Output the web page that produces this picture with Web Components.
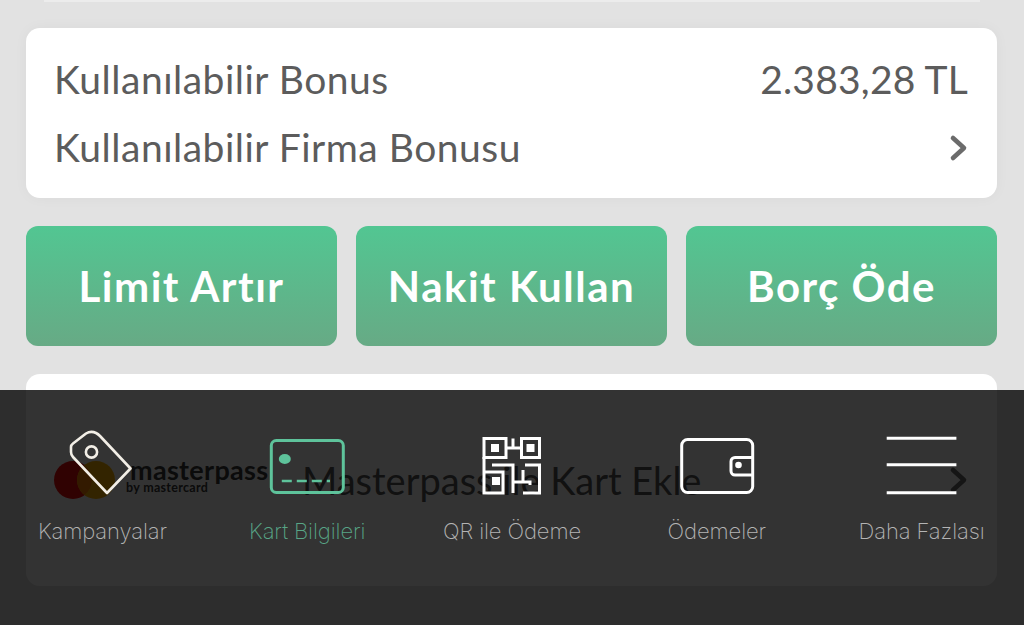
<!DOCTYPE html>
<html lang="tr">
<head>
<meta charset="utf-8">
<title>Kart Bilgileri</title>
<style>
    html, body { margin: 0; height: 625px; overflow: hidden; background: #e2e2e2; }
</style>
</head>
<body>
<app-screen>
    <bonus-card></bonus-card>
    <action-buttons>
        <action-button>Limit Artır</action-button>
        <action-button>Nakit Kullan</action-button>
        <action-button>Borç Öde</action-button>
    </action-buttons>
    <masterpass-card></masterpass-card>
    <tab-bar slot="overlay">
        <tab-item label="Kampanyalar">
            <svg viewBox="0 0 80 68" width="80" height="68" fill="none" stroke="#f2eee6" stroke-width="2.6" stroke-linejoin="round">
                <path d="M11 13.5 L24 3.5 Q29 0.5 34 3 Q36 4 38 6 L68.5 38.5 L45 63 L11 27 Q9 25 9 22 L9 17 Q9 15 11 13.5 Z"/>
                <circle cx="29.5" cy="22" r="5.6"/>
            </svg>
        </tab-item>
        <tab-item label="Kart Bilgileri" active>
            <svg viewBox="0 0 80 68" width="80" height="68" fill="none" stroke="#5ec39b" stroke-width="3">
                <rect x="4.3" y="10.5" width="72" height="52" rx="5"/>
                <ellipse cx="17.8" cy="29" rx="6" ry="5" fill="#5ec39b" stroke="none"/>
                <path d="M14.8 51H63" stroke-width="2.4" stroke-dasharray="10 5"/>
            </svg>
        </tab-item>
        <tab-item label="QR ile Ödeme">
            <svg viewBox="0 0 80 68" width="80" height="68" fill="none" stroke="#fff" stroke-width="3">
                <rect x="12" y="8.5" width="22" height="19"/>
                <rect x="49.5" y="8.5" width="18" height="19"/>
                <rect x="19" y="14" width="8" height="8" fill="#fff" stroke="none"/>
                <rect x="54.5" y="14" width="8" height="8" fill="#fff" stroke="none"/>
                <rect x="20" y="47" width="8" height="8" fill="#fff" stroke="none"/>
                <path d="M34 18H49.5M41 8.5V18M12 27V63H31V42H12M20 35H41V63M53 35H67.5V63H51M41 52H58V55M51 40V52"/>
            </svg>
        </tab-item>
        <tab-item label="Ödemeler">
            <svg viewBox="0 0 80 68" width="80" height="68" fill="none" stroke="#fff" stroke-width="3">
                <rect x="4.7" y="9.5" width="71" height="53" rx="6"/>
                <path d="M75.7 27.5H58a4 4 0 0 0-4 4V41a4 4 0 0 0 4 4H75.7"/>
                <circle cx="61.5" cy="35" r="3.3" fill="#fff" stroke="none"/>
            </svg>
        </tab-item>
        <tab-item label="Daha Fazlası">
            <svg viewBox="0 0 80 68" width="80" height="68" fill="none" stroke="#fff" stroke-width="3">
                <path d="M4.7 8.3H74.4M4.7 34.7H74.4M4.7 62.7H74.4"/>
            </svg>
        </tab-item>
    </tab-bar>
</app-screen>

<script>
'use strict';

const CHEVRON = `
    <svg class="chevron" viewBox="0 0 20 28" width="20" height="28" fill="none" stroke="#6b6b6b" stroke-width="4.6" stroke-linecap="round" stroke-linejoin="round">
        <path d="M4 4L15 14L4 24"/>
    </svg>`;

// shadow root from a string, same thing for every element below
function shell(el, html) {
    el.attachShadow({ mode: 'open' }).innerHTML = html;
}

class AppScreen extends HTMLElement {
    constructor() {
        super();
        shell(this, `
            <style>
                :host {
                    display: block;
                    position: relative;
                    height: 625px;
                    overflow: hidden;
                    background: #e2e2e2;
                    font-family: "Lato", "Noto Sans", sans-serif;
                }
                .sliver {
                    height: 2px;
                    margin: 0 44px 26px;
                    background: #ececec;
                    box-shadow: 0 4px 14px rgba(0, 0, 0, .03);
                }
                .content {
                    display: flex;
                    flex-direction: column;
                    gap: 28px;
                    padding: 0 27px 0 26px;
                }
            </style>
            <div class="sliver"></div>
            <div class="content"><slot></slot></div>
            <slot name="overlay"></slot>
        `);
    }
}

class BonusCard extends HTMLElement {
    constructor() {
        super();
        shell(this, `
            <style>
                :host {
                    display: block;
                    box-sizing: border-box;
                    height: 170px;
                    padding: 17px 29px 17px 28px;
                    background: #fff;
                    border-radius: 14px;
                    box-shadow: 0 0 14px rgba(0, 0, 0, .04);
                    color: #5c5c5c;
                    font-size: 39px;
                    letter-spacing: .5px;
                }
                .row {
                    display: flex;
                    align-items: center;
                    justify-content: space-between;
                    height: 68px;
                }
                .amount { letter-spacing: .2px; }
                .chevron { margin: 2px -1px 0 0; }
            </style>
            <div class="row"><span>Kullanılabilir Bonus</span><span class="amount">2.383,28 TL</span></div>
            <div class="row"><span>Kullanılabilir Firma Bonusu</span>${CHEVRON}</div>
        `);
    }
}

class ActionButtons extends HTMLElement {
    constructor() {
        super();
        shell(this, `
            <style>
                :host {
                    display: grid;
                    grid-template-columns: repeat(3, 1fr);
                    gap: 19px;
                }
            </style>
            <slot></slot>
        `);
    }
}

class ActionButton extends HTMLElement {
    constructor() {
        super();
        shell(this, `
            <style>
                :host {
                    display: flex;
                    align-items: center;
                    justify-content: center;
                    height: 120px;
                    border-radius: 12px;
                    background: linear-gradient(#52c692, #67aa85);
                    color: #fff;
                    font-size: 42px;
                    font-weight: 700;
                    letter-spacing: 1.5px;
                }
            </style>
            <slot></slot>
        `);
    }
}

class MasterpassCard extends HTMLElement {
    constructor() {
        super();
        shell(this, `
            <style>
                :host {
                    display: flex;
                    align-items: center;
                    box-sizing: border-box;
                    height: 212px;
                    padding: 0 29px 0 28px;
                    background: #fff;
                    border-radius: 14px;
                    color: #555;
                    font-size: 38px;
                }
                .logo { display: flex; align-items: center; width: 248px; flex: none; color: #3a3a3a; }
                .logo svg { flex: none; }
                .wordmark { display: flex; flex-direction: column; margin: -6px 0 0 14px; }
                .name {
                    font-size: 27px;
                    font-weight: 700;
                    line-height: 20px;
                    letter-spacing: .3px;
                }
                .by {
                    margin: 2px 0 0 -4px;
                    font-size: 12.5px;
                    font-weight: 700;
                    line-height: 12px;
                    letter-spacing: .3px;
                }
                .title { flex: 1; }
                .chevron { margin-right: -1px; }
            </style>
            <div class="logo">
                <svg viewBox="0 0 62 40" width="62" height="40">
                    <circle cx="19" cy="20" r="19" fill="#f00a0a"/>
                    <circle cx="42" cy="20" r="19" fill="#ffb400"/>
                    <path d="M30.5 5a19 19 0 0 1 0 30a19 19 0 0 1 0-30z" fill="#ff8000"/>
                </svg>
                <div class="wordmark"><span class="name">masterpass</span><span class="by">by mastercard</span></div>
            </div>
            <span class="title">Masterpass ile Kart Ekle</span>
            ${CHEVRON.replace('width="20" height="28"', 'width="20" height="30"')}
        `);
    }
}

class TabBar extends HTMLElement {
    constructor() {
        super();
        shell(this, `
            <style>
                :host {
                    position: absolute;
                    left: 0;
                    right: 0;
                    top: 390px;
                    bottom: 0;
                    display: grid;
                    grid-template-columns: repeat(5, 1fr);
                    align-content: start;
                    padding-top: 40px;
                    background: rgba(0, 0, 0, .8);
                }
            </style>
            <slot></slot>
        `);
    }
}

class TabItem extends HTMLElement {
    static get observedAttributes() {
        return ['label'];
    }

    constructor() {
        super();
        shell(this, `
            <style>
                :host {
                    display: flex;
                    flex-direction: column;
                    align-items: center;
                    color: #b4b4b4;
                    font-family: "Inter", "Liberation Sans", sans-serif;
                    font-weight: 200;
                    font-size: 22px;
                    letter-spacing: -.1px;
                }
                :host([active]) { color: #58a586; }
                ::slotted(svg) { display: block; }
                .label { margin-top: 18px; line-height: 30px; white-space: nowrap; }
            </style>
            <slot></slot>
            <span class="label"></span>
        `);
    }

    connectedCallback() {
        this.render();
    }

    attributeChangedCallback() {
        this.render();
    }

    render() {
        this.shadowRoot.querySelector('.label').textContent = this.getAttribute('label');
    }
}

customElements.define('app-screen', AppScreen);
customElements.define('bonus-card', BonusCard);
customElements.define('action-buttons', ActionButtons);
customElements.define('action-button', ActionButton);
customElements.define('masterpass-card', MasterpassCard);
customElements.define('tab-bar', TabBar);
customElements.define('tab-item', TabItem);
</script>
</body>
</html>
